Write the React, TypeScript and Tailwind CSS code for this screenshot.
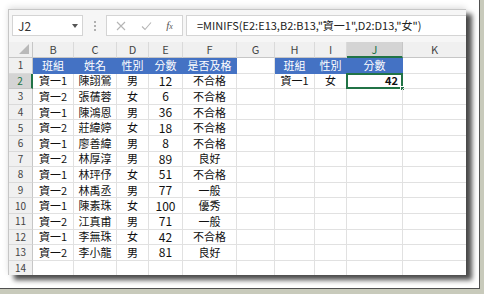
import { ReactNode } from "react";

const cols = ["B", "C", "D", "E", "F", "G", "H", "I", "J", "K"];

const data: string[][] = [
  ["資一1", "陳詡鶯", "男", "12", "不合格"],
  ["資一2", "張蒨蓉", "女", "6", "不合格"],
  ["資一1", "陳鴻恩", "男", "36", "不合格"],
  ["資一2", "莊緯婷", "女", "18", "不合格"],
  ["資一1", "廖善緯", "男", "8", "不合格"],
  ["資一2", "林厚淳", "男", "89", "良好"],
  ["資一1", "林玶伃", "女", "51", "不合格"],
  ["資一2", "林禹丞", "男", "77", "一般"],
  ["資一1", "陳素珠", "女", "100", "優秀"],
  ["資一2", "江真甫", "男", "71", "一般"],
  ["資一1", "李無珠", "女", "42", "不合格"],
  ["資一2", "李小龍", "男", "81", "良好"],
];

const gridCols =
  "grid grid-cols-[24px_41px_43px_32px_34px_54px_38px_40px_32px_56px_64px]";

function Cell({ children, className = "" }: { children?: ReactNode; className?: string }) {
  return (
    <div
      className={
        "relative flex items-center justify-center border-r border-b border-[#e1e1e1] leading-none whitespace-nowrap " +
        className
      }>
      {children}
    </div>
  );
}

function RowHead({ n, active = false }: { n: number; active?: boolean }) {
  return (
    <div
      className={
        "flex items-center justify-center border-b text-[10px] leading-none " +
        (active
          ? "bg-[#d4d4d4] border-b-[#c6c6c6] border-r-2 border-r-[#217346] text-[#217346]"
          : "bg-[#f0f0f0] border-b-[#dadada] border-r border-r-[#c6c6c6] text-[#444]")
      }>
      {n}
    </div>
  );
}

function App(): ReactNode {
  const blue = "bg-[#4472c4] text-white border-b-[#4472c4] border-r-[#4472c4]";

  return (
    <div className="w-[484px] h-[294px] bg-[#c8cabb] overflow-hidden">
      <div
        className="w-[480px] h-[289px] bg-white border-r border-b border-[#505050] pl-[8px] pt-[9px]"
        style={{ fontFamily: '"Noto Sans CJK TC", "Noto Sans", sans-serif' }}>
        {/* sheet window */}
        <div className="w-[458px] h-[266px] bg-white border-l border-t border-[#c6c6c6] overflow-hidden shadow-[6px_5px_5px_rgba(0,0,0,0.7),0_-2px_6px_rgba(0,0,0,0.12)]">
          {/* formula bar */}
          <div className="h-[31px] flex items-center bg-[#f6f6f6]">
            <div className="ml-[3px] w-[71px] h-[21px] bg-white border border-[#d4d4d4] flex items-center justify-between pl-[5px] pr-[4px]">
              <span className="text-[12px] text-[#333] leading-none">J2</span>
              <span className="w-0 h-0 border-l-[3px] border-r-[3px] border-t-[4px] border-l-transparent border-r-transparent border-t-[#555]" />
            </div>
            <div className="w-[23px] flex flex-col items-center gap-[2px]">
              <span className="w-[2px] h-[2px] bg-[#b0b0b0]" />
              <span className="w-[2px] h-[2px] bg-[#b0b0b0]" />
              <span className="w-[2px] h-[2px] bg-[#b0b0b0]" />
            </div>
            <div className="w-[77px] h-[21px] bg-white border border-[#d4d4d4] flex items-center justify-around px-[2px]">
              <svg width="10" height="10" viewBox="0 0 10 10">
                <path d="M1 1L9 9M9 1L1 9" stroke="#b5b5b5" strokeWidth="1.1" fill="none" />
              </svg>
              <svg width="11" height="10" viewBox="0 0 11 10">
                <path d="M1 5.5L4 8.5L10 1.5" stroke="#b5b5b5" strokeWidth="1.1" fill="none" />
              </svg>
              <span className="text-[11px] italic text-[#555] leading-none" style={{ fontFamily: '"Liberation Serif", serif' }}>
                f<span className="text-[8px]">x</span>
              </span>
            </div>
            <div className="ml-[3px] flex-1 h-[21px] bg-white border-l border-t border-b border-[#d4d4d4] flex items-center pl-[10px]">
              <span className="text-[11px] text-[#222] leading-none whitespace-nowrap">
                =MINIFS(E2:E13,B2:B13,"資一1",D2:D13,"女")
              </span>
            </div>
          </div>

          {/* column headers */}
          <div className={gridCols + " h-[17px] pt-[1px] bg-[#f6f6f6]"}>
            <div className="flex items-end justify-end pr-[3px] pb-[3px] bg-[#f0f0f0] border-r border-b border-[#c6c6c6]">
              <svg width="10" height="10" viewBox="0 0 10 10">
                <path d="M10 0L10 10L0 10Z" fill="#b9b9b9" />
              </svg>
            </div>
            {cols.map((c) => (
              <div
                key={c}
                className={
                  "flex items-center justify-center text-[11px] leading-none border-r " +
                  (c === "J"
                    ? "bg-[#d4d4d4] text-[#217346] border-r-[#c6c6c6] border-b-2 border-b-[#217346]"
                    : "bg-[#f0f0f0] text-[#444] border-r-[#dadada] border-b border-b-[#c6c6c6]")
                }>
                {c}
              </div>
            ))}
          </div>

          {/* rows */}
          <div className="text-[11px] text-[#111]">
            <div className={gridCols + " h-[15.6px]"}>
              <RowHead n={1} />
              <Cell className={blue}>班組</Cell>
              <Cell className={blue}>姓名</Cell>
              <Cell className={blue}>性別</Cell>
              <Cell className={blue}>分數</Cell>
              <Cell className={blue}>是否及格</Cell>
              <Cell />
              <Cell className={blue}>班組</Cell>
              <Cell className={blue}>性別</Cell>
              <Cell className={blue}>分數</Cell>
              <Cell />
            </div>

            {data.map((r, i) => (
              <div key={i} className={gridCols + " h-[15.6px]"}>
                <RowHead n={i + 2} active={i === 0} />
                {r.map((v, j) => (
                  <Cell key={j} className={j === 3 ? "text-[12px]" : ""}>
                    {v}
                  </Cell>
                ))}
                <Cell />
                {i === 0 ? (
                  <>
                    <Cell>資一1</Cell>
                    <Cell>女</Cell>
                    <Cell className="justify-end pr-[4px] font-bold">
                      42
                      <span className="absolute -top-[1px] -left-[1px] -right-[1px] -bottom-[1px] border-2 border-[#217346]" />
                      <span className="absolute -right-[3px] -bottom-[3px] w-[5px] h-[5px] bg-[#217346] border border-white" />
                    </Cell>
                  </>
                ) : (
                  <>
                    <Cell />
                    <Cell />
                    <Cell />
                  </>
                )}
                <Cell />
              </div>
            ))}

            <div className={gridCols + " h-[15.6px]"}>
              <RowHead n={14} />
              {cols.map((c) => (
                <Cell key={c} />
              ))}
            </div>
          </div>
        </div>
      </div>
    </div>
  );
}

export default App;
